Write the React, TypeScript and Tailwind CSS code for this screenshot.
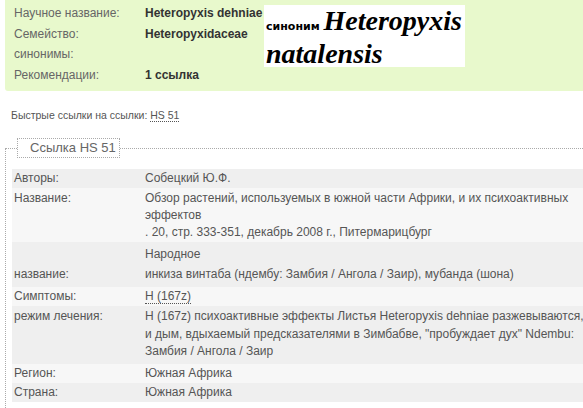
import React from 'react';

const topRows = [
  { label: 'Научное название:', value: 'Heteropyxis dehniae' },
  { label: 'Семейство:', value: 'Heteropyxidaceae' },
  { label: 'синонимы:', value: '' },
  { label: 'Рекомендации:', value: '1 ссылка' },
];

function Row({ label, children, dark, className = '' }: { label: React.ReactNode; children: React.ReactNode; dark?: boolean; className?: string }) {
  return (
    <div className={`flex ${dark ? 'bg-[#efefef]' : 'bg-[#f7f7f7]'} ${className}`}>
      <div className="w-[133px] shrink-0 pl-[2px]">{label}</div>
      <div className="flex-1">{children}</div>
    </div>
  );
}

export default function App() {
  return (
    <div className="w-[583px] h-[408px] overflow-hidden bg-white text-[12px] text-[#555]" style={{ fontFamily: '"Liberation Sans", Arial, sans-serif' }}>
      {/* верхняя панель */}
      <div className="ml-[5px] h-[91px] bg-[#e8f9cc] rounded-bl-[3px] flex">
        <div className="w-[259px] shrink-0 pl-[9px] pt-[3px] overflow-hidden">
          {topRows.map((r) => (
            <div key={r.label} className="flex h-[20.7px] leading-[20px]">
              <div className="w-[131px] shrink-0 text-[#666]">{r.label}</div>
              <div className="font-bold text-[#333] whitespace-nowrap">{r.value}</div>
            </div>
          ))}
        </div>
        <div className="mt-[5px] w-[201px] h-[62px] bg-white pl-[2px] pt-[2px] text-black">
          <div className="leading-[27px] whitespace-nowrap">
            <span className="text-[11px] font-bold" style={{ fontFamily: '"DejaVu Sans", Verdana, sans-serif' }}>синоним </span>
            <span className="text-[28px] font-bold italic" style={{ fontFamily: '"Liberation Serif", "Times New Roman", serif' }}>Heteropyxis</span>
          </div>
          <div className="text-[28px] leading-[28px] font-bold italic" style={{ fontFamily: '"Liberation Serif", "Times New Roman", serif' }}>natalensis</div>
        </div>
      </div>

      {/* быстрые ссылки */}
      <div className="pl-[11px] pt-[17px] text-[10.5px] leading-[14px] text-[#555]">
        Быстрые ссылки на ссылки: <span className="border-b border-dotted border-[#555]">HS 51</span>
      </div>

      {/* блок ссылки */}
      <div className="relative mt-[26px] ml-[5px] w-[640px] h-[300px] border-l border-t border-dotted border-[#aaa]">
        <div className="absolute left-[11px] top-[-11px] w-[103px] h-[20px] bg-white border border-dotted border-[#aaa] pl-[12px] text-[13px] leading-[18px] text-[#666]">
          Ссылка HS 51
        </div>
        <div className="pt-[20px] pl-[6px] leading-[17px]">
          <Row label="Авторы:" dark className="py-[1px]">Собецкий Ю.Ф.</Row>
          <Row label="Название:" className="pt-[2px] pb-[1px]">
            Обзор растений, используемых в южной части Африки, и их психоактивных
            <br />
            эффектов
            <br />. 20, стр. 333-351, декабрь 2008 г., Питермарицбург
          </Row>
          <Row label={<div className="pt-[20px]">название:</div>} dark className="pt-[2px] pb-[3px] leading-[20px]">
            Народное
            <br />
            инкиза винтаба (ндембу: Замбия / Ангола / Заир), мубанда (шона)
          </Row>
          <Row label="Симптомы:" className="py-[1px]">
            <span className="border-b border-dotted border-[#555]">H (167z)</span>
          </Row>
          <Row label="режим лечения:" dark className="pt-[2px] pb-[3px] leading-[17.5px]">
            H (167z) психоактивные эффекты Листья Heteropyxis dehniae разжевываются,
            <br />
            и дым, вдыхаемый предсказателями в Зимбабве, "пробуждает дух" Ndembu:
            <br />
            Замбия / Ангола / Заир
          </Row>
          <Row label="Регион:" className="py-[1px]">Южная Африка</Row>
          <Row label="Страна:" dark className="py-[1px]">Южная Африка</Row>
        </div>
      </div>
    </div>
  );
}
